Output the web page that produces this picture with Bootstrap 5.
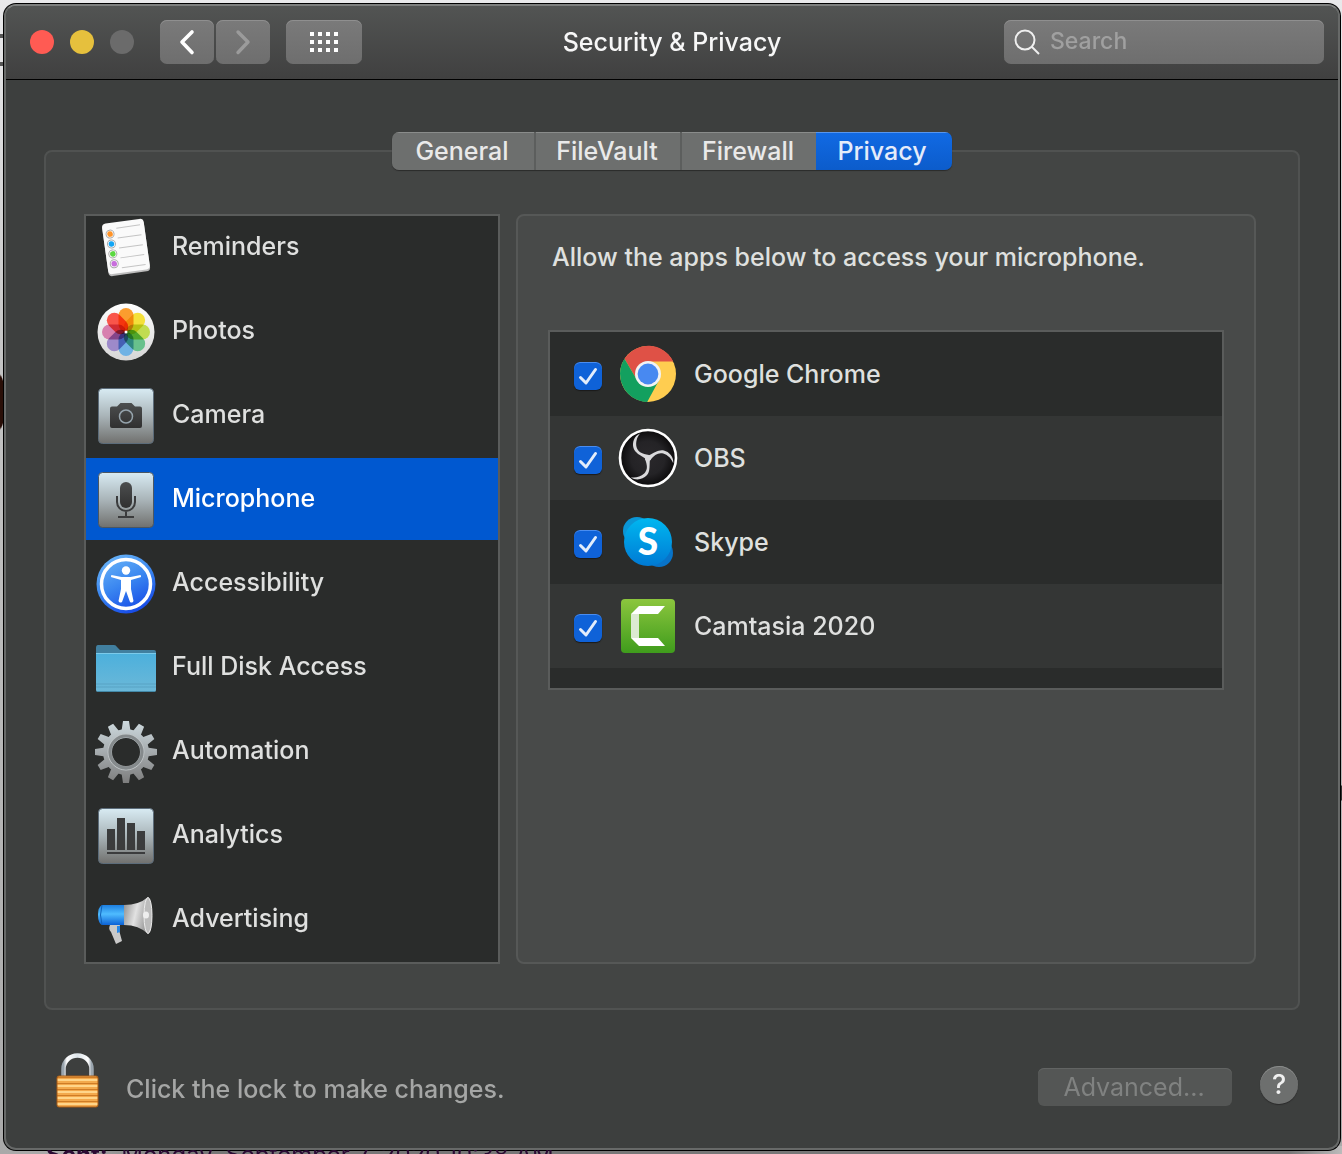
<!DOCTYPE html>
<html lang="en">
<head>
<meta charset="utf-8">
<meta name="viewport" content="width=device-width, initial-scale=1">
<title>Security &amp; Privacy</title>
<link href="https://cdn.jsdelivr.net/npm/bootstrap@5.3.0/dist/css/bootstrap.min.css" rel="stylesheet">
<style>
body{
  font-family:Inter,"Liberation Sans",sans-serif;font-size:25px;font-weight:500;line-height:32px;color:#dfe0df;
  background:
    radial-gradient(ellipse 5px 28px at 0 402px,#2a0f08 90%,transparent) no-repeat,
    radial-gradient(ellipse 3px 8px at 100% 793px,#333 90%,transparent) no-repeat,
    linear-gradient(#555,#555) 0 34px/4px 4px no-repeat,
    linear-gradient(#555,#555) 0 62px/4px 4px no-repeat,
    linear-gradient(90deg,transparent 60px,#777 200px,#777 96%,#bbb) 0 100%/100% 8px no-repeat,
    linear-gradient(#e9e9eb,#c4c4c4 30%,#a9a9a9);
}
button,input{font-weight:500}
.desktop{min-height:100vh;padding:4px 2px 0 4px}
.win{background:#3d3f3e;border:2px solid #676968;border-top-color:#7d7f7e;border-radius:12px;box-shadow:0 0 0 1px #000;overflow:hidden}
.titlebar{height:74px;padding:0 14px 1px;background:linear-gradient(#525453,#404040);border-bottom:1px solid #000}
.side{flex:1 1 0}
.lights{gap:16px;margin:0 26px 0 10px}
.light{width:24px;height:24px;border:0;border-radius:50%;padding:0}
.light-close{background:#ff5b53}.light-min{background:#e6c03d}.light-zoom{background:#6b6b6b}
.tools{gap:2px}
.tool{height:44px;width:54px;padding:0;border:0;border-radius:7px;background:linear-gradient(#7a7a7a,#6e6e6e);box-shadow:inset 0 1px #8f8f8f}
.tool-wide{width:76px;margin-left:14px}
.tool:disabled{opacity:1}
.wintitle{font-size:25px;line-height:32px;font-weight:500;color:#f7f7f7}
.searchbox{width:320px;height:44px;padding:0 10px;border-radius:7px;background:linear-gradient(#7a7a7a,#6e6e6e);box-shadow:inset 0 1px #8f8f8f}
.searchbox input{background:transparent;border:0;outline:0;color:#fff;font-size:23px;min-width:0;margin:0 0 2px 10px}
.searchbox input::placeholder{color:#a0a0a0;opacity:1}
.content{padding:52px 38px 0}
.tabs{height:38px;margin-bottom:-20px;border-radius:7px;overflow:hidden;z-index:1;box-shadow:0 1px 1px #2b2b2b}
.tabs button{border:0;padding:0 2px 0 0;background:#6d6f6e;color:#e9e9e9;width:144px;border-right:2px solid #5c5e5d;box-shadow:inset 0 1px #8a8c8b}
.tabs button:nth-child(2){width:146px}
.tabs button:nth-child(3){width:134px;border-right:0}
.tabs button.active{width:136px;border:0;padding-right:4px;background:linear-gradient(#116ae4,#0c5ccb);color:#e4ecfa;box-shadow:inset 0 1px #5796ee}
.groupbox{border:2px solid #505251;border-radius:8px;background:#434544;padding:62px 42px 44px 38px;gap:16px}
.services{width:416px;height:750px;border:2px solid #5a5c5b;background:#2a2c2b}
.services a{height:82px;margin-bottom:2px;padding:2px 8px 0;color:#dfe0df;gap:14px;flex:none}
.services a span{margin-bottom:4px}
.services a.active{background:#0058d0;color:#fff}
.services svg{width:64px;height:64px;flex:none}
.pane{border:2px solid #565857;border-radius:8px;background:#484a49;padding:25px 30px}
.pane p{margin:0 4px 57px}
.apps{border:2px solid #5a5c5b;background:#2a2c2b;padding-bottom:20px}
.app-row{height:84px;padding:0 24px}
.app-row:nth-child(even){background:#343635}
.app-row .form-check-input{width:28px;height:28px;margin:4px 0 0;border:0;border-radius:6px;box-shadow:inset 0 1px #4a8df0,0 1px 1px #1a1a1a;background-size:28px 28px}
.app-row .form-check-input:checked{background-color:#0f62d8;background-image:url("data:image/svg+xml,%3Csvg xmlns='http://www.w3.org/2000/svg' viewBox='0 0 28 28'%3E%3Cpath d='M6.5 15.5l5.5 5.5L21.5 7.5' fill='none' stroke='%23e3edfb' stroke-width='3' stroke-linecap='round' stroke-linejoin='round'/%3E%3C/svg%3E")}
.app-row label{gap:16px;margin-left:16px}
.app-row svg{width:60px;height:60px}
.bottom{height:138px;padding:16px 40px 0 50px}
.lockbtn{padding:0;border:0;background:none;line-height:0}
.hint{color:#a5a6a5;margin:4px 0 0 24px}
.advanced{width:194px;height:38px;border:0;border-radius:6px;padding:0 2px 0 0;background:#545655;color:#808281;font-weight:400;box-shadow:inset 0 1px #626463}
.helpbtn{width:38px;height:38px;border:0;border-radius:50%;padding:0;background:#6d6f6e;color:#f0f0f0;font-size:27px;margin:0 0 4px 28px;box-shadow:inset 0 1px #8a8c8b,0 1px 1px #2b2b2b}
.behind{height:4px;overflow:hidden;padding-left:42px;font-size:24px;font-weight:400;line-height:10px;color:#2b0a33}
</style>
</head>
<body>
<svg width="0" height="0" class="position-absolute" aria-hidden="true">
  <defs>
    <linearGradient id="tile" x2="0" y2="1"><stop stop-color="#d8ebf3"/><stop offset=".5" stop-color="#a9b4b8"/><stop offset="1" stop-color="#70706e"/></linearGradient>
    <linearGradient id="dark" x2="0" y2="1"><stop stop-color="#4c4e4f"/><stop offset="1" stop-color="#303030"/></linearGradient>
    <linearGradient id="blue" x1=".2" y1="0" x2=".7" y2="1"><stop stop-color="#6bb6f8"/><stop offset=".5" stop-color="#3a86f0"/><stop offset="1" stop-color="#1446e6"/></linearGradient>
    <linearGradient id="fold" x2="0" y2="1"><stop stop-color="#4cb0dc"/><stop offset="1" stop-color="#6cb8d8"/></linearGradient>
    <linearGradient id="gear" x2="0" y2="1"><stop stop-color="#cfdbe0"/><stop offset="1" stop-color="#7c7c7c"/></linearGradient>
    <linearGradient id="horn" x2="1" y2=".3"><stop stop-color="#8b8b8b"/><stop offset=".5" stop-color="#e2e2e2"/><stop offset="1" stop-color="#8e8e8e"/></linearGradient>
    <linearGradient id="mega" x2="0" y2="1"><stop stop-color="#1d7fe0"/><stop offset=".45" stop-color="#4fbcff"/><stop offset="1" stop-color="#0c62d6"/></linearGradient>
    <linearGradient id="sky" x2="0" y2="1"><stop stop-color="#00b7f0"/><stop offset="1" stop-color="#007ad4"/></linearGradient>
    <linearGradient id="camt" x2="0" y2="1"><stop stop-color="#8cc63e"/><stop offset="1" stop-color="#3f9c1c"/></linearGradient>
    <linearGradient id="disc" x2="0" y2="1"><stop stop-color="#fff"/><stop offset="1" stop-color="#d6d6d6"/></linearGradient>
    <linearGradient id="shackle" x2="1" y2="0"><stop stop-color="#9aa5ae"/><stop offset=".12" stop-color="#fff"/><stop offset=".5" stop-color="#dbe3e8"/><stop offset=".88" stop-color="#fff"/><stop offset="1" stop-color="#9aa5ae"/></linearGradient>
    <pattern id="brass" width="44" height="6" patternUnits="userSpaceOnUse" y="25"><rect width="44" height="6" fill="#f3a94c"/><rect width="44" height="2" y="1" fill="#ffd58a"/><rect width="44" height="1" y="5" fill="#cf7c26"/></pattern>
    <radialGradient id="obs"><stop stop-color="#2a282b"/><stop offset=".6" stop-color="#242326"/><stop offset="1" stop-color="#0b0a0b"/></radialGradient>
    <mask id="gearmask" maskUnits="userSpaceOnUse" x="-32" y="-32" width="64" height="64"><g fill="#fff"><circle r="18.500" fill="none" stroke="#fff" stroke-width="9"/><path id="tooth" d="M-4.500-21L-3-31H3L4.500-21zM-4.500 21L-3 31H3L4.500 21z"/><use href="#tooth" transform="rotate(30)"/><use href="#tooth" transform="rotate(60)"/><use href="#tooth" transform="rotate(90)"/><use href="#tooth" transform="rotate(120)"/><use href="#tooth" transform="rotate(150)"/></g></mask>
  </defs>
</svg>
<div class="desktop d-flex flex-column">
  <main class="win flex-grow-1 d-flex flex-column">
    <header class="titlebar d-flex align-items-center">
      <div class="side d-flex align-items-center">
        <div class="lights d-flex">
          <button class="light light-close" aria-label="Close"></button>
          <button class="light light-min" aria-label="Minimize"></button>
          <button class="light light-zoom" aria-label="Zoom" disabled></button>
        </div>
        <div class="tools d-flex">
          <button class="btn tool d-flex align-items-center justify-content-center" aria-label="Back"><svg width="20" height="28" fill="none" stroke="#fff" stroke-width="3.600" stroke-linecap="round" stroke-linejoin="round"><path d="M15 4L5 14l10 10.500"/></svg></button>
          <button class="btn tool d-flex align-items-center justify-content-center" aria-label="Forward" disabled><svg width="20" height="28" fill="none" stroke="#9b9b9b" stroke-width="3.400" stroke-linecap="round" stroke-linejoin="round"><path d="M5 4L15 14 5 24.500"/></svg></button>
          <button class="btn tool tool-wide d-flex align-items-center justify-content-center" aria-label="Show all"><svg width="28" height="20" stroke="#fff" stroke-width="4" stroke-dasharray="4 4"><path d="M0 2h28M0 10h28M0 18h28"/></svg></button>
        </div>
      </div>
      <h1 class="wintitle m-0">Security &amp; Privacy</h1>
      <div class="side d-flex justify-content-end">
        <label class="searchbox d-flex align-items-center">
          <svg class="flex-shrink-0" width="26" height="26" fill="none" stroke="#efefef" stroke-width="2" aria-hidden="true"><circle cx="11" cy="11" r="9.500"/><path d="M17.500 17.500L25 25"/></svg>
          <input class="flex-grow-1 p-0" type="search" placeholder="Search" aria-label="Search">
        </label>
      </div>
    </header>

    <section class="content flex-grow-1 d-flex flex-column">
      <div class="tabs d-flex align-self-center position-relative" role="tablist">
        <button role="tab">General</button><button role="tab">FileVault</button><button role="tab">Firewall</button><button role="tab" class="active" aria-selected="true">Privacy</button>
      </div>
      <div class="groupbox d-flex flex-grow-1">
        <nav class="services d-flex flex-column justify-content-end overflow-hidden flex-shrink-0" aria-label="Services">
          <a href="#" class="d-flex align-items-center text-decoration-none">
            <svg viewBox="0 0 64 64"><g transform="rotate(-8 32 31)"><rect x="11" y="6" width="42" height="52" rx="4" fill="#bdbdbd"/><rect x="11" y="5" width="42" height="51" rx="4" fill="#fafafa"/><g stroke="#c4c4c4" fill="none"><path d="M25 11h24M25 21h24M25 31h24M25 41h24M25 51h24"/><g fill="#fff" stroke="#aaa"><circle cx="18" cy="16" r="4"/><circle cx="18" cy="26" r="4"/><circle cx="18" cy="36" r="4"/><circle cx="18" cy="46" r="4"/></g></g><circle cx="18" cy="16" r="2.800" fill="#ff9327"/><circle cx="18" cy="26" r="2.800" fill="#11a5f5"/><circle cx="18" cy="36" r="2.800" fill="#5bd841"/><circle cx="18" cy="46" r="2.800" fill="#c86fdc"/></g></svg>
            <span>Reminders</span></a>
          <a href="#" class="d-flex align-items-center text-decoration-none">
            <svg viewBox="-32 -32 64 64"><circle r="28.500" fill="url(#disc)"/><g style="isolation:isolate"><rect style="mix-blend-mode:multiply" x="-7.500" y="-24" width="15" height="24" rx="7.500" fill="#fb9d2e"/><rect style="mix-blend-mode:multiply" transform="rotate(45)" x="-7.500" y="-24" width="15" height="24" rx="7.500" fill="#f4e03a"/><rect style="mix-blend-mode:multiply" transform="rotate(90)" x="-7.500" y="-24" width="15" height="24" rx="7.500" fill="#c1dc50"/><rect style="mix-blend-mode:multiply" transform="rotate(135)" x="-7.500" y="-24" width="15" height="24" rx="7.500" fill="#68c18c"/><rect style="mix-blend-mode:multiply" transform="rotate(180)" x="-7.500" y="-24" width="15" height="24" rx="7.500" fill="#70b2e4"/><rect style="mix-blend-mode:multiply" transform="rotate(225)" x="-7.500" y="-24" width="15" height="24" rx="7.500" fill="#9d8aca"/><rect style="mix-blend-mode:multiply" transform="rotate(270)" x="-7.500" y="-24" width="15" height="24" rx="7.500" fill="#d77fae"/><rect style="mix-blend-mode:multiply" transform="rotate(315)" x="-7.500" y="-24" width="15" height="24" rx="7.500" fill="#f9554a"/></g><circle r="1.500" fill="#fff"/></svg>
            <span>Photos</span></a>
          <a href="#" class="d-flex align-items-center text-decoration-none">
            <svg viewBox="0 0 64 64"><rect x="4.500" y="4.500" width="55" height="55" rx="4" fill="url(#tile)" stroke="#5c6c7a"/><path d="M18 22.500h5l3.500-3.500h11l3.500 3.500h5q2 0 2 2V42q0 2-2 2H18q-2 0-2-2V24.500q0-2 2-2z" fill="url(#dark)"/><circle cx="32" cy="32.500" r="6.500" fill="none" stroke="#95a3ac" stroke-width="1.500"/></svg>
            <span>Camera</span></a>
          <a href="#" class="active d-flex align-items-center text-decoration-none" aria-current="true">
            <svg viewBox="0 0 64 64"><rect x="4.500" y="4.500" width="55" height="55" rx="4" fill="url(#tile)" stroke="#4a5662"/><rect x="26" y="14" width="12" height="26" rx="6" fill="url(#dark)"/><path d="M23 28v6a9 9 0 0 0 18 0v-6M32 43v6M24 49h16" fill="none" stroke="#3b3c3d" stroke-width="2"/></svg>
            <span>Microphone</span></a>
          <a href="#" class="d-flex align-items-center text-decoration-none">
            <svg viewBox="0 0 64 64"><circle cx="32" cy="32" r="29.500" fill="url(#blue)"/><circle cx="32" cy="32" r="24.500" fill="none" stroke="#fff" stroke-width="3.500"/><circle cx="32" cy="18.500" r="4.200" fill="#fff"/><path d="M17.500 23l10 2h9l10-2q1.500 2-1 2.500L37 28v9l2.500 12q-1 2.500-3.500 1L32 39l-4 11q-2.500 1.500-3.500-1L27 37v-9l-8.500-2.500q-2.500-.5-1-2.500z" fill="#fff"/></svg>
            <span>Accessibility</span></a>
          <a href="#" class="d-flex align-items-center text-decoration-none">
            <svg viewBox="0 0 64 64"><path d="M2 12q0-3 2-3h16q2 0 3 2l3 3h34q2 0 2 2v8H2z" fill="#417f9f"/><path d="M2 17.500h60V54q0 2-2 2H4q-2 0-2-2z" fill="url(#fold)"/><path d="M2 17.500h60" stroke="#7bcaea"/><path d="M2 48h60M2 51h60" stroke="#58a3c4"/><path d="M3 55.500h58" stroke="#4389a8"/></svg>
            <span>Full Disk Access</span></a>
          <a href="#" class="d-flex align-items-center text-decoration-none">
            <svg viewBox="-32 -32 64 64"><rect x="-32" y="-32" width="64" height="64" fill="url(#gear)" mask="url(#gearmask)"/><circle r="18" fill="none" stroke="#c0c5c7"/><circle r="16" fill="none" stroke="#858a8c" stroke-width="3"/></svg>
            <span>Automation</span></a>
          <a href="#" class="d-flex align-items-center text-decoration-none">
            <svg viewBox="0 0 64 64"><rect x="4.500" y="4.500" width="55" height="55" rx="4" fill="url(#tile)" stroke="#5c6c7a"/><path d="M13 25h8v21h-8zM23 14h8v32h-8zM33 19h8v27h-8zM43 27h8v19h-8zM13 48h38v2H13z" fill="#3b3c3d"/></svg>
            <span>Analytics</span></a>
          <a href="#" class="d-flex align-items-center text-decoration-none">
            <svg viewBox="0 0 64 64"><path d="M16 37h10l-1 5 3 11-6 3-5-12q-3-3-1-7z" fill="#c9c9c9"/><path d="M23 38h3v6l-3 1z" fill="#2a88e6"/><path d="M8 17h22v20H8q-4-2-4-10t4-10z" fill="url(#mega)"/><path d="M8 17q-3 10 0 20" stroke="#1161b8" fill="none"/><path d="M30 17q15 0 24-8 4 3 4 19t-4 18q-9-9-24-9z" fill="url(#horn)"/><ellipse cx="54" cy="27.500" rx="4" ry="18" fill="#bcbcbc" stroke="#ededed"/><ellipse cx="52" cy="27" rx="3" ry="3.500" fill="#eee"/></svg>
            <span>Advertising</span></a>
        </nav>

        <section class="pane flex-grow-1">
          <p>Allow the apps below to access your microphone.</p>
          <div class="apps">
            <div class="app-row d-flex align-items-center"><input class="form-check-input" type="checkbox" id="chrome" checked>
              <label for="chrome" class="d-flex align-items-center"><svg viewBox="-30 -30 60 60"><circle r="28" fill="#ffcd50"/><path d="M-23.500-15.200A28 28 0 0 1 25.300-12.500H0L-10.800 6.200z" fill="#df5146"/><path d="M-23.500-15.200A28 28 0 0 0-.8 28L11 6.200 0 12-10.800 6.200z" fill="#13a05f"/><circle r="13" fill="#f3f3f3"/><circle r="10.400" fill="#4889f1"/></svg><span>Google Chrome</span></label></div>
            <div class="app-row d-flex align-items-center"><input class="form-check-input" type="checkbox" id="obsapp" checked>
              <label for="obsapp" class="d-flex align-items-center"><svg viewBox="-30 -30 60 60"><circle r="28" fill="url(#obs)" stroke="#fff" stroke-width="2.600"/><circle r="3" fill="#dadadc"/><g fill="#dadadc"><path id="blade" d="M-8-24.500C-14-22-16-15-14.500-10C-13-5-8-3-2 1L1-3C-6-4-10-6-11.500-11C-12.500-16-11-21-8-24.500z"/><use href="#blade" transform="rotate(120)"/><use href="#blade" transform="rotate(240)"/></g></svg><span>OBS</span></label></div>
            <div class="app-row d-flex align-items-center"><input class="form-check-input" type="checkbox" id="skype" checked>
              <label for="skype" class="d-flex align-items-center"><svg viewBox="-30 -30 60 60"><circle cx="-11" cy="-11" r="14" fill="#0a96d6"/><circle cx="11" cy="11" r="14" fill="#0873c8"/><circle r="24" fill="url(#sky)"/><text y="13" text-anchor="middle" font-family="Lato,sans-serif" font-weight="900" font-size="37" fill="#fff">S</text></svg><span>Skype</span></label></div>
            <div class="app-row d-flex align-items-center"><input class="form-check-input" type="checkbox" id="camtasia" checked>
              <label for="camtasia" class="d-flex align-items-center"><svg viewBox="-30 -30 60 60"><rect x="-27" y="-27" width="54" height="54" rx="4" fill="url(#camt)"/><path d="M-17-12h8v24h-8z" fill="#dcead2"/><path d="M-17-12L-9-20H17L10-12zM-17 12L-9 20H17L10 12z" fill="#fff"/></svg><span>Camtasia 2020</span></label></div>
          </div>
        </section>
      </div>
    </section>

    <footer class="bottom d-flex align-items-center">
      <button class="lockbtn" aria-label="Unlock"><svg width="46" height="68"><path d="M7.500 26V16a14 13.500 0 0 1 28 0v10" fill="none" stroke="url(#shackle)" stroke-width="4.500"/><rect x="1" y="23" width="41" height="31" rx="2" fill="url(#brass)" stroke="#a85a14"/></svg></button>
      <span class="hint">Click the lock to make changes.</span>
      <button class="advanced ms-auto" disabled>Advanced...</button>
      <button class="helpbtn" aria-label="Help">?</button>
    </footer>
  </main>
  <div class="behind flex-shrink-0 text-nowrap" aria-hidden="true"><b>Sent:</b>&nbsp; Monday, September 7, 2020 10:38 AM</div>
</div>
<script src="https://cdn.jsdelivr.net/npm/bootstrap@5.3.0/dist/js/bootstrap.bundle.min.js"></script>
</body>
</html>
